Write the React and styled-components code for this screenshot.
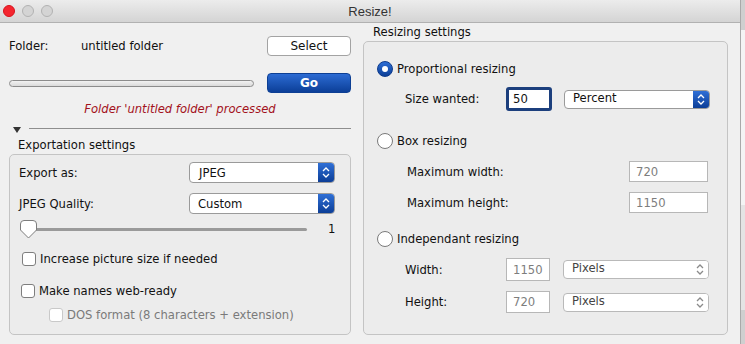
import React from "react";
import styled, { createGlobalStyle } from "styled-components";

const GlobalStyle = createGlobalStyle`
  html, body {
    margin: 0;
    padding: 0;
    background: #d6d6d6;
    font-family: "DejaVu Sans", "Liberation Sans", sans-serif;
    font-size: 11.6px;
    color: #111;
  }
  * { box-sizing: border-box; }
`;

const Screen = styled.div`
  display: flex;
  width: 745px;
  height: 344px;
  overflow: hidden;
`;

const Window = styled.div`
  width: 741px;
  height: 344px;
  background: #f0f0f0;
  border-right: 1px solid #a9a9a9;
  display: flex;
  flex-direction: column;
`;

const BackStrip = styled.div`
  flex: 1;
  background: linear-gradient(#cfcfcf 0, #cfcfcf 30px, #f4f4f4 30px, #f4f4f4 205px, #e4e4e4 205px, #e4e4e4 310px, #cfcfcf 310px);
`;

const TitleBar = styled.div`
  height: 23px;
  display: grid;
  grid-template-columns: 1fr auto 1fr;
  align-items: center;
  background: linear-gradient(#ececec, #d4d4d4);
  border-bottom: 1px solid #b1b1b1;
`;

const Lights = styled.div`
  display: flex;
  gap: 7px;
  padding-left: 3px;
`;

const Light = styled.span`
  width: 12px;
  height: 12px;
  border-radius: 50%;
  background: ${(p) => (p.$red ? "#f4262f" : "#d4d4d4")};
  border: 1px solid ${(p) => (p.$red ? "#d8121c" : "#b2b2b2")};
`;

const Title = styled.div`
  font-size: 13px;
  color: #333;
  font-family: "Liberation Sans", sans-serif;
`;

const Body = styled.div`
  display: flex;
  gap: 12px;
  padding-left: 9px;
`;

const LeftCol = styled.div`
  width: 342px;
  display: flex;
  flex-direction: column;
`;

const RightCol = styled.div`
  width: 364px;
  display: flex;
  flex-direction: column;
`;

const Row = styled.div`
  display: flex;
  align-items: center;
  height: ${(p) => p.$h || 20}px;
  margin-top: ${(p) => p.$top || 0}px;
  padding-left: ${(p) => p.$left || 0}px;
`;

const Label = styled.span`
  width: ${(p) => (p.$w ? `${p.$w}px` : "auto")};
  flex-shrink: 0;
  color: ${(p) => (p.$muted ? "#7a7a7a" : "#111")};
`;

const Spacer = styled.div`
  flex: 1;
`;

const PushButton = styled.button`
  width: 84px;
  height: 20px;
  border-radius: 4px;
  font-family: inherit;
  font-size: 12px;
  padding: 0;
  border: 1px solid ${(p) => (p.$primary ? "#0d3f94" : "#a3a3a3")};
  color: ${(p) => (p.$primary ? "#fff" : "#111")};
  font-weight: ${(p) => (p.$primary ? "bold" : "normal")};
  background: ${(p) => (p.$primary ? "linear-gradient(#2c6bd3, #0c3f98)" : "#fff")};
`;

const Progress = styled.div`
  width: 245px;
  height: 7px;
  border-radius: 4px;
  border: 1px solid #8c8c8c;
  background: linear-gradient(#f2f2f2, #dadada);
`;

const Status = styled.div`
  margin-top: 8px;
  height: 16px;
  line-height: 16px;
  text-align: center;
  color: #a3121c;
  font-style: italic;
`;

const Disclosure = styled.div`
  display: flex;
  align-items: center;
  height: 10px;
  margin-top: 6px;
  padding-left: 4px;
  gap: 8px;
`;

const Triangle = styled.span`
  width: 0;
  height: 0;
  border-left: 4px solid transparent;
  border-right: 4px solid transparent;
  border-top: 6px solid #333;
  margin-top: 3px;
`;

const Rule = styled.div`
  flex: 1;
  height: 1px;
  background: #8e8e8e;
`;

const Legend = styled.div`
  padding-left: ${(p) => p.$left}px;
  margin-top: ${(p) => p.$top}px;
  height: 15px;
  line-height: 15px;
`;

const GroupBox = styled.div`
  width: ${(p) => p.$w}px;
  height: ${(p) => p.$h}px;
  margin-top: 1px;
  border: 1px solid #c4c4c4;
  border-radius: 5px;
  background: #ececec;
  display: flex;
  flex-direction: column;
`;

const PopupWrap = styled.div`
  width: ${(p) => p.$w}px;
  height: ${(p) => p.$h || 21}px;
  display: flex;
  border: 1px solid ${(p) => (p.$disabled ? "#b9b9b9" : "#9a9a9a")};
  border-radius: 4px;
  background: #fff;
  overflow: hidden;
  flex-shrink: 0;
`;

const PopupText = styled.span`
  flex: 1;
  padding-left: ${(p) => p.$pad || 8}px;
  display: flex;
  align-items: ${(p) => (p.$raise ? "flex-start" : "center")};
  color: ${(p) => (p.$disabled ? "#444" : "#111")};
`;

const PopupArrow = styled.span`
  width: 16px;
  display: flex;
  align-items: center;
  justify-content: center;
  background: ${(p) => (p.$disabled ? "#fff" : "linear-gradient(#2f6fd6, #0c3e97)")};
`;

const Chevrons = ({ color }) => (
  <svg width="8" height="11" viewBox="0 0 8 11">
    <path d="M1 4 L4 1 L7 4 M1 7 L4 10 L7 7" fill="none" stroke={color} strokeWidth="1.3" />
  </svg>
);

const Popup = ({ w, h, value, disabled, pad, raise }) => (
  <PopupWrap $w={w} $h={h} $disabled={disabled}>
    <PopupText $disabled={disabled} $pad={pad} $raise={raise}>
      {value}
    </PopupText>
    <PopupArrow $disabled={disabled}>
      <Chevrons color={disabled ? "#8a8a8a" : "#fff"} />
    </PopupArrow>
  </PopupWrap>
);

const Field = styled.div`
  width: ${(p) => p.$w}px;
  height: ${(p) => p.$h}px;
  flex-shrink: 0;
  background: #fff;
  display: flex;
  align-items: center;
  padding-left: ${(p) => (p.$focus ? 4 : 6)}px;
  color: ${(p) => (p.$focus ? "#111" : "#7d7d7d")};
  border: ${(p) => (p.$focus ? "3px solid #1c3f7d" : "1px solid #b7b7b7")};
  border-radius: ${(p) => (p.$focus ? 3 : 0)}px;
`;

const SliderRow = styled.div`
  display: flex;
  align-items: center;
  height: 20px;
  margin-top: 5px;
  padding-left: 11px;
`;

const Track = styled.div`
  position: relative;
  width: 286px;
  height: 3px;
  border-radius: 2px;
  background: #9a9a9a;
`;

const Knob = styled.svg`
  position: absolute;
  left: -1px;
  top: -8px;
`;

const SliderValue = styled.span`
  margin-left: 21px;
`;

const Check = styled.span`
  width: 14px;
  height: 14px;
  flex-shrink: 0;
  border-radius: 3px;
  background: #fff;
  border: 1px solid ${(p) => (p.$disabled ? "#c9c9c9" : "#7e7e7e")};
  margin-right: 4px;
`;

const Radio = styled.span`
  width: 16px;
  height: 16px;
  flex-shrink: 0;
  border-radius: 50%;
  margin-right: 4px;
  display: flex;
  align-items: center;
  justify-content: center;
  background: ${(p) => (p.$on ? "linear-gradient(#2f6fd6, #0c3e97)" : "#fff")};
  border: 1px solid ${(p) => (p.$on ? "#0c3a8c" : "#7a7a7a")};

  &::after {
    content: "";
    display: ${(p) => (p.$on ? "block" : "none")};
    width: 6px;
    height: 6px;
    border-radius: 50%;
    background: #fff;
  }
`;

const Gap = styled.span`
  width: ${(p) => p.$w}px;
  flex-shrink: 0;
`;

export default function App() {
  return (
    <>
      <GlobalStyle />
      <Screen>
        <Window>
          <TitleBar>
            <Lights>
              <Light $red />
              <Light />
              <Light />
            </Lights>
            <Title>Resize!</Title>
            <div />
          </TitleBar>
          <Body>
            <LeftCol>
              <Row $top={13}>
                <Label $w={72}>Folder:</Label>
                <Label>untitled folder</Label>
                <Spacer />
                <PushButton>Select</PushButton>
              </Row>
              <Row $top={17}>
                <Progress />
                <Spacer />
                <PushButton $primary>Go</PushButton>
              </Row>
              <Status>Folder 'untitled folder' processed</Status>
              <Disclosure>
                <Triangle />
                <Rule />
              </Disclosure>
              <Legend $left={9} $top={5}>Exportation settings</Legend>
              <GroupBox $w={342} $h={181}>
                <Row $top={7} $h={21} $left={9}>
                  <Label $w={170}>Export as:</Label>
                  <Popup w={146} value="JPEG" pad={9} />
                </Row>
                <Row $top={10} $h={21} $left={9}>
                  <Label $w={170}>JPEG Quality:</Label>
                  <Popup w={146} value="Custom" />
                </Row>
                <SliderRow>
                  <Track>
                    <Knob width="17" height="19" viewBox="0 0 17 19">
                      <path
                        d="M4 0.5 H13 A3.5 3.5 0 0 1 16.5 4 V10 L8.5 18 L0.5 10 V4 A3.5 3.5 0 0 1 4 0.5 Z"
                        fill="#fff"
                        stroke="#7d7d7d"
                      />
                    </Knob>
                  </Track>
                  <SliderValue>1</SliderValue>
                </SliderRow>
                <Row $top={11} $h={18} $left={12}>
                  <Check />
                  <Label>Increase picture size if needed</Label>
                </Row>
                <Row $top={14} $h={18} $left={11}>
                  <Check />
                  <Label>Make names web-ready</Label>
                </Row>
                <Row $top={6} $h={18} $left={39}>
                  <Check $disabled />
                  <Label $muted>DOS format (8 characters + extension)</Label>
                </Row>
              </GroupBox>
            </LeftCol>
            <RightCol>
              <Legend $left={10} $top={2}>Resizing settings</Legend>
              <GroupBox $w={365} $h={294}>
                <Row $top={18} $h={18} $left={13}>
                  <Radio $on />
                  <Label>Proportional resizing</Label>
                </Row>
                <Row $top={9} $h={24} $left={41}>
                  <Label $w={101}>Size wanted:</Label>
                  <Field $w={46} $h={24} $focus>50</Field>
                  <Gap $w={12} />
                  <Popup w={146} h={19} value="Percent" raise />
                </Row>
                <Row $top={21} $h={18} $left={13}>
                  <Radio />
                  <Label>Box resizing</Label>
                </Row>
                <Row $top={11} $h={21} $left={43}>
                  <Label $w={222}>Maximum width:</Label>
                  <Field $w={79} $h={21}>720</Field>
                </Row>
                <Row $top={10} $h={21} $left={43}>
                  <Label $w={222}>Maximum height:</Label>
                  <Field $w={79} $h={21}>1150</Field>
                </Row>
                <Row $top={17} $h={18} $left={13}>
                  <Radio />
                  <Label>Independant resizing</Label>
                </Row>
                <Row $top={10} $h={23} $left={41}>
                  <Label $w={101}>Width:</Label>
                  <Field $w={44} $h={23}>1150</Field>
                  <Gap $w={13} />
                  <Popup w={146} h={19} value="Pixels" disabled raise />
                </Row>
                <Row $top={10} $h={22} $left={41}>
                  <Label $w={101}>Height:</Label>
                  <Field $w={44} $h={22}>720</Field>
                  <Gap $w={13} />
                  <Popup w={146} h={19} value="Pixels" disabled raise />
                </Row>
              </GroupBox>
            </RightCol>
          </Body>
        </Window>
        <BackStrip />
      </Screen>
    </>
  );
}
